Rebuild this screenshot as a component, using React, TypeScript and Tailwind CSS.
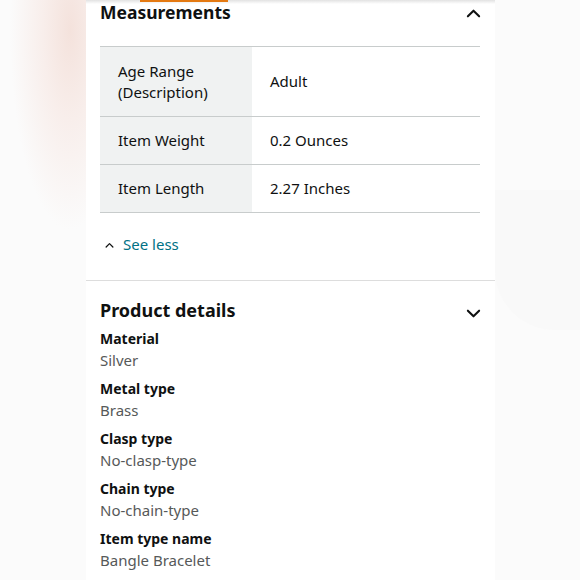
import React from "react";

const ChevronUp = ({ className }: { className?: string }) => (
  <svg viewBox="0 0 16 10" className={className} fill="none" stroke="currentColor" strokeWidth="2.2" strokeLinecap="round" strokeLinejoin="round">
    <path d="M2 8.5 L8 2.5 L14 8.5" />
  </svg>
);
const ChevronDown = ({ className }: { className?: string }) => (
  <svg viewBox="0 0 16 10" className={className} fill="none" stroke="currentColor" strokeWidth="2.2" strokeLinecap="round" strokeLinejoin="round">
    <path d="M2 1.5 L8 7.5 L14 1.5" />
  </svg>
);

const rows: [string[], string, string][] = [
  [["Age Range", "(Description)"], "Adult", "h-[70px]"],
  [["Item Weight"], "0.2 Ounces", "h-[48px]"],
  [["Item Length"], "2.27 Inches", "h-[48px]"],
];

const details: [string, string][] = [
  ["Material", "Silver"],
  ["Metal type", "Brass"],
  ["Clasp type", "No-clasp-type"],
  ["Chain type", "No-chain-type"],
  ["Item type name", "Bangle Bracelet"],
];

export default function App() {
  return (
    <div
      className="relative w-[580px] h-[580px] overflow-hidden bg-[#fbfbfb] text-[#0f1111]"
      style={{ fontFamily: '"Noto Sans", "Open Sans", sans-serif' }}
    >
      <div className="absolute inset-0 bg-[radial-gradient(ellipse_60px_200px_at_70px_30px,#f4e2dc_0%,#f8eeeb_45%,rgba(250,250,250,0)_100%)]" />
      <div className="absolute left-[495px] top-[190px] w-[100px] h-[140px] rounded-bl-[60px] bg-[#f9f9f9]" />

      <div className="relative ml-[86px] w-[409px] h-full bg-white">
        <div className="absolute left-0 right-0 top-0 h-[4px] bg-[linear-gradient(to_bottom,#e2e2e2,#ffffff)]" />
        <div className="absolute left-[54px] top-0 w-[88px] h-[2px] bg-[#e47911]" />

        <div className="px-[14px]">
          <div className="flex items-start justify-between h-[46px]">
            <div className="text-[17.5px] font-bold leading-[24px]">Measurements</div>
            <ChevronUp className="w-[15px] h-[10px] mt-[8px]" />
          </div>

          <div className="border-t border-[#c8cccc] w-[380px]">
            {rows.map(([label, value, h], i) => (
              <div key={i} className={`flex border-b border-[#c8cccc] text-[15px] leading-[21px] ${h}`}>
                <div className="w-[152px] shrink-0 bg-[#f0f2f2] pl-[18px] flex flex-col justify-center">
                  {label.map((l) => (
                    <div key={l}>{l}</div>
                  ))}
                </div>
                <div className="flex items-center pl-[18px]">{value}</div>
              </div>
            ))}
          </div>

          <div className="flex items-center h-[63px] text-[15px] text-[#007185]">
            <ChevronUp className="w-[9px] h-[6px] ml-[5px] mr-[9px] text-[#0f1111]" />
            <span>See less</span>
          </div>
        </div>

        <div className="border-t border-[#dddddd] mt-[4px]" />

        <div className="px-[14px] pt-[16px]">
          <div className="flex items-start justify-between">
            <div className="text-[18px] font-bold leading-[26px]">Product details</div>
            <ChevronDown className="w-[15px] h-[10px] mt-[12px]" />
          </div>
          <div className="mt-[6px] flex flex-col gap-[8px]">
            {details.map(([k, v]) => (
              <div key={k}>
                <div className="text-[14px] font-bold leading-[20px]">{k}</div>
                <div className="text-[15px] leading-[22px] text-[#565959]">{v}</div>
              </div>
            ))}
          </div>
        </div>
      </div>
    </div>
  );
}
